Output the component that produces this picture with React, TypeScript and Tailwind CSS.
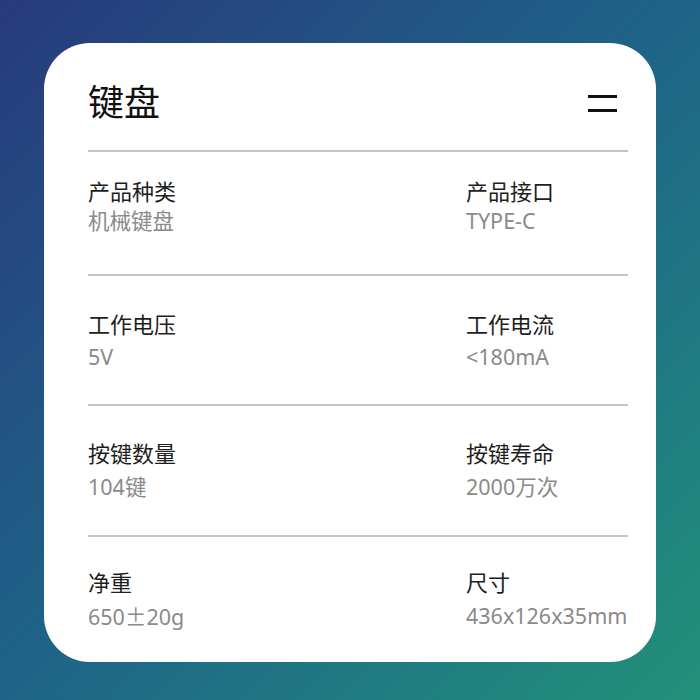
const specs = [
  {
    rowCls: "pt-[24px] pb-[38px] border-b-2 border-[#c4c4c4]",
    valueCls: "mt-0",
    items: [
      { label: "产品种类", value: "机械键盘" },
      { label: "产品接口", value: "TYPE-C" },
    ],
  },
  {
    rowCls: "pt-[33px] pb-[32px] border-b-2 border-[#c4c4c4]",
    valueCls: "mt-[3px]",
    items: [
      { label: "工作电压", value: "5V" },
      { label: "工作电流", value: "<180mA" },
    ],
  },
  {
    rowCls: "pt-[32px] pb-[33px] border-b-2 border-[#c4c4c4]",
    valueCls: "mt-[4px]",
    items: [
      { label: "按键数量", value: "104键" },
      { label: "按键寿命", value: "2000万次" },
    ],
  },
  {
    rowCls: "pt-[30px]",
    valueCls: "mt-[4px]",
    items: [
      { label: "净重", value: "650±20g" },
      { label: "尺寸", value: "436x126x35mm" },
    ],
  },
];

// ± 用中文字体显示（全角宽度）
function Value({ text }: { text: string }) {
  const parts = text.split("±");
  if (parts.length === 1) return <>{text}</>;
  return (
    <>
      {parts[0]}
      <span style={{ fontFamily: '"Noto Sans CJK SC", sans-serif' }}>±</span>
      {parts[1]}
    </>
  );
}

export default function App() {
  return (
    <div
      className="w-[700px] h-[700px] flex justify-center pt-[43px] bg-[linear-gradient(135deg,#283a7c_0%,#1e6488_50%,#22917a_100%)]"
      style={{ fontFamily: '"Noto Sans", "Noto Sans CJK SC", sans-serif' }}
    >
      <div className="w-[612px] h-[619px] bg-white rounded-[46px] pl-[44px] pr-[28px] pt-[38px]">
        {/* 标题 */}
        <div className="flex items-center justify-between pb-[25px] border-b-2 border-[#c4c4c4]">
          <h1 className="text-[36px] leading-[44px] text-[#111]">键盘</h1>
          <div className="flex flex-col gap-[11px] mr-[11px]">
            <span className="block w-[29px] h-[3px] bg-[#111]" />
            <span className="block w-[29px] h-[3px] bg-[#111]" />
          </div>
        </div>

        {/* 参数 */}
        {specs.map((row, i) => (
          <div key={i} className={`grid grid-cols-[378px_1fr] ${row.rowCls}`}>
            {row.items.map((item) => (
              <div key={item.label} className="flex flex-col">
                <span className="text-[22px] leading-[30px] text-[#1e1e1e]">{item.label}</span>
                <span className={`text-[21.5px] leading-[30px] text-[#8a8a8a] ${row.valueCls}`}>
                  <Value text={item.value} />
                </span>
              </div>
            ))}
          </div>
        ))}
      </div>
    </div>
  );
}
